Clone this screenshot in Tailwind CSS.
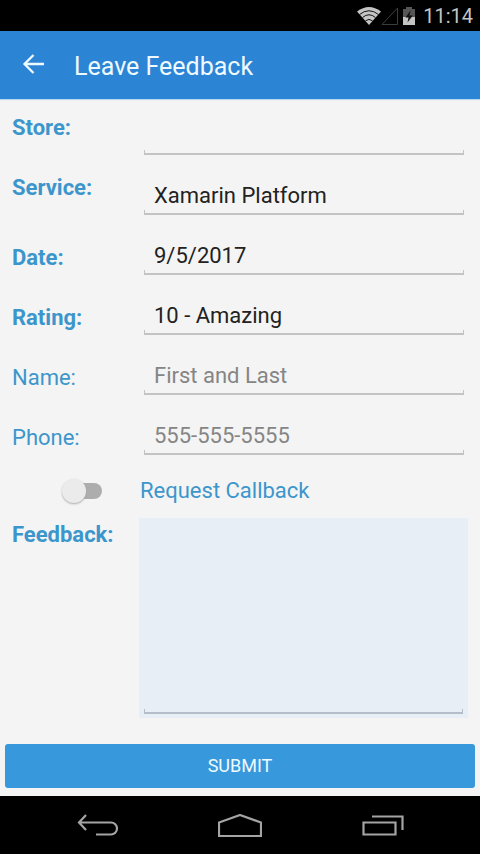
<!DOCTYPE html>
<html lang="en">
<head>
<meta charset="utf-8">
<meta name="viewport" content="width=device-width, initial-scale=1">
<title>Leave Feedback</title>
<script src="https://cdn.jsdelivr.net/npm/@tailwindcss/browser@4"></script>
</head>
<body class="flex min-h-screen flex-col bg-[#f4f4f4] font-['Roboto',sans-serif] text-[22px] leading-7 text-[#222]">

<div class="flex h-[31px] items-center justify-end bg-black pr-[7px] text-[#c4c4c4]">
  <svg class="h-[18px] w-6" viewBox="0 0 24 18" fill="none" aria-label="Wi-Fi">
    <path d="M12 18L0 4.500Q12-4.500 24 4.500Z" fill="#c4c4c4"/>
    <path d="M2.500 7.500Q12 0 21.500 7.500M5.500 10.500Q12 5 18.500 10.500M8.500 13.800Q12 11 15.500 13.800" stroke="#111" stroke-width="1"/>
  </svg>
  <svg class="h-5 w-[18px]" viewBox="0 0 18 20" fill="none" stroke="#3c3c3c" aria-label="No signal">
    <path d="M1 18.500H16.500V2Z"/>
  </svg>
  <svg class="ml-1 h-5 w-3" viewBox="0 0 12 20" aria-label="Charging">
    <path d="M0 3H3V1H9V3H12V11H0Z" fill="#555"/>
    <path d="M0 11H12V19H0Z" fill="#c4c4c4"/>
    <path d="M7.500 4.500L2.500 11.500H5.500L4.500 16.500L9.800 9.500H6.500Z" fill="#111"/>
  </svg>
  <time class="ml-2 text-[20px] leading-6">11:14</time>
</div>

<header class="flex h-17 items-center bg-[#2c84d4] pl-[22px] text-[#eefaff] shadow-[0_1px_1px_#b9d7ee]">
  <button type="button" aria-label="Back" class="flex h-6 w-6 items-center justify-center">
    <svg class="h-6 w-6" viewBox="0 0 24 24" fill="none" stroke="currentColor" stroke-width="2.300"><path d="M11.500 2L2.500 11L11.500 20M3 11H22"/></svg>
  </button>
  <h1 class="ml-7 pt-1 text-[25px] leading-8">Leave Feedback</h1>
</header>

<form class="flex flex-1 flex-col text-[#3c96cc]">
  <div class="flex h-14 items-end pr-4 pl-3">
    <label for="store" class="w-33 shrink-0 pb-[13px] font-bold">Store:</label>
    <div class="flex-1">
      <input id="store" type="text" class="block h-7 w-full px-[10px] text-[#222] outline-none">
      <div class="h-[5px] border-x border-b-2 border-[#c2c4c4]"></div>
    </div>
  </div>
  <div class="flex h-15 items-end pr-4 pl-3">
    <label for="service" class="w-33 shrink-0 pb-[13px] font-bold">Service:</label>
    <div class="flex-1">
      <input id="service" type="text" value="Xamarin Platform" class="block h-7 w-full px-[10px] text-[#222] outline-none">
      <div class="h-[5px] border-x border-b-2 border-[#c2c4c4]"></div>
    </div>
  </div>
  <div class="flex h-15 items-end pr-4 pl-3">
    <label for="date" class="w-33 shrink-0 pb-[3px] font-bold">Date:</label>
    <div class="flex-1">
      <input id="date" type="text" value="9/5/2017" class="block h-7 w-full px-[10px] text-[#222] outline-none">
      <div class="h-[5px] border-x border-b-2 border-[#c2c4c4]"></div>
    </div>
  </div>
  <div class="flex h-15 items-end pr-4 pl-3">
    <label for="rating" class="w-33 shrink-0 pb-[3px] font-bold">Rating:</label>
    <div class="flex-1">
      <input id="rating" type="text" value="10 - Amazing" class="block h-7 w-full px-[10px] text-[#222] outline-none">
      <div class="h-[5px] border-x border-b-2 border-[#c2c4c4]"></div>
    </div>
  </div>
  <div class="flex h-15 items-end pr-4 pl-3">
    <label for="name" class="w-33 shrink-0 pb-[3px]">Name:</label>
    <div class="flex-1">
      <input id="name" type="text" placeholder="First and Last" class="block h-7 w-full px-[10px] text-[#222] outline-none placeholder:text-[#858585]">
      <div class="h-[5px] border-x border-b-2 border-[#c2c4c4]"></div>
    </div>
  </div>
  <div class="flex h-15 items-end pr-4 pl-3">
    <label for="phone" class="w-33 shrink-0 pb-[3px]">Phone:</label>
    <div class="flex-1">
      <input id="phone" type="tel" placeholder="555-555-5555" class="block h-7 w-full px-[10px] text-[#222] outline-none placeholder:text-[#858585]">
      <div class="h-[5px] border-x border-b-2 border-[#c2c4c4]"></div>
    </div>
  </div>

  <div class="flex h-[63px] items-center pt-2 pl-16">
    <input id="callback" type="checkbox" role="switch" class="flex h-4 w-[38px] appearance-none items-center rounded-full bg-[#adadad] before:-ml-[2px] before:size-6 before:shrink-0 before:rounded-full before:bg-[#ebebeb] before:shadow-[0_1px_2px_#aaa] before:content-['']">
    <label for="callback" class="ml-[38px]">Request Callback</label>
  </div>

  <div class="flex min-h-50 flex-1 pr-3 pl-3">
    <label for="feedback" class="w-[127px] shrink-0 pt-[3px] font-bold">Feedback:</label>
    <div class="flex flex-1 flex-col bg-[#e8eef5] px-[5px] pb-1">
      <textarea id="feedback" class="block w-full flex-1 resize-none p-2 text-[#222] outline-none"></textarea>
      <div class="h-[5px] border-x border-b-2 border-[#b6bdca]"></div>
    </div>
  </div>

  <button type="submit" class="mx-[5px] mt-[26px] mb-2 h-11 rounded-[3px] bg-[#3798db] text-lg text-[#eefaff]">SUBMIT</button>
</form>

<nav class="flex h-[58px] items-center justify-between bg-black px-19 pt-[2px] text-[#a4a4a4]">
  <button type="button" aria-label="Back">
    <svg class="h-6 w-11" viewBox="0 0 44 24" fill="none" stroke="currentColor" stroke-width="2.200"><path d="M10 1L3 8.500L10 16M3 8.500H35A6 6 0 0 1 35 20.500H20"/></svg>
  </button>
  <button type="button" aria-label="Home">
    <svg class="h-6 w-11" viewBox="0 0 44 24" fill="none" stroke="currentColor" stroke-width="2.200"><path d="M1 22V8.500L22 1L43 8.500V22Z"/></svg>
  </button>
  <button type="button" aria-label="Recent apps">
    <svg class="h-6 w-11" viewBox="0 0 44 24" fill="none" stroke="currentColor" stroke-width="2.200"><path d="M3.500 8.500H35.500V20.500H3.500ZM12 2.500H42.500V16"/></svg>
  </button>
</nav>

</body>
</html>
